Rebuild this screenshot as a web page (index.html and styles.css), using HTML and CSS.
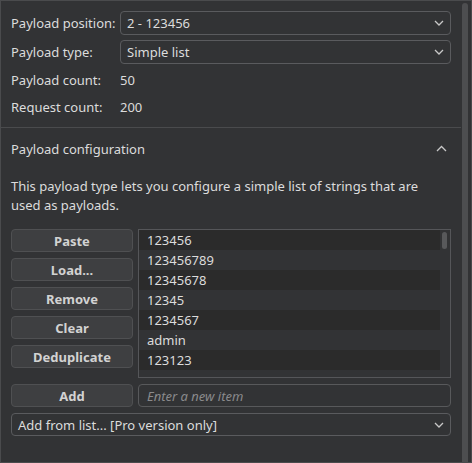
FILE: index.html
```html
<!DOCTYPE html>
<html>
<head>
<meta charset="utf-8">
<link rel="stylesheet" href="styles.css">
</head>
<body>
<div class="frame">
  <div class="content">
    <div class="fields">
      <div class="label">Payload position:</div>
      <div class="select"><span>2 - 123456</span><svg class="chev" viewBox="0 0 10 6"><path d="M1 1 L5 5 L9 1"/></svg></div>
      <div class="label">Payload type:</div>
      <div class="select"><span>Simple list</span><svg class="chev" viewBox="0 0 10 6"><path d="M1 1 L5 5 L9 1"/></svg></div>
      <div class="label">Payload count:</div>
      <div class="value">50</div>
      <div class="label">Request count:</div>
      <div class="value">200</div>
    </div>
    <div class="section">
      <div class="section-head">
        <span>Payload configuration</span>
        <svg class="chev-up" viewBox="0 0 11 7"><path d="M1 6 L5.5 1.5 L10 6"/></svg>
      </div>
      <p class="desc">This payload type lets you configure a simple list of strings that are used as payloads.</p>
      <div class="editor">
        <div class="buttons">
          <div class="btn">Paste</div>
          <div class="btn">Load...</div>
          <div class="btn">Remove</div>
          <div class="btn">Clear</div>
          <div class="btn">Deduplicate</div>
        </div>
        <div class="list">
          <div class="rows">
            <div class="row">123456</div>
            <div class="row">123456789</div>
            <div class="row">12345678</div>
            <div class="row">12345</div>
            <div class="row">1234567</div>
            <div class="row">admin</div>
            <div class="row">123123</div>
          </div>
          <div class="list-scroll"><div class="list-thumb"></div></div>
        </div>
      </div>
      <div class="add-row">
        <div class="btn">Add</div>
        <div class="input">Enter a new item</div>
      </div>
      <div class="select wide"><span>Add from list... [Pro version only]</span><svg class="chev" viewBox="0 0 10 6"><path d="M1 1 L5 5 L9 1"/></svg></div>
    </div>
  </div>
  <div class="scrollbar"><div class="thumb"></div></div>
</div>
</body>
</html>
```

FILE: styles.css
```css
* { box-sizing: border-box; }
html, body { margin: 0; padding: 0; background: #323335; }
body {
  font-family: "Noto Sans", "Open Sans", sans-serif;
  font-size: 13px;
  color: #dcdcdc;
}
.frame {
  width: 472px;
  height: 463px;
  border: 1px solid #4a4b4d;
  display: flex;
  overflow: hidden;
  background: #323335;
}
.content {
  width: 460px;
  flex: none;
}
.fields {
  display: grid;
  grid-template-columns: 104px 1fr;
  grid-template-rows: 24px 24px 22px 22px;
  column-gap: 5px;
  row-gap: 5px;
  padding: 10px 10px 0 10px;
  align-items: center;
}
.label, .value { line-height: 19px; white-space: nowrap; }
.select {
  height: 24px;
  border: 1px solid #5a5b5e;
  border-radius: 4px;
  display: flex;
  align-items: center;
  justify-content: space-between;
  padding: 0 6px 0 6px;
}
.chev { width: 10px; height: 6px; }
.chev path, .chev-up path {
  fill: none;
  stroke: #c8c8c8;
  stroke-width: 1.3;
}
.section {
  margin-top: 9px;
  border-top: 1px solid #4a4b4d;
  padding: 0 10px;
}
.section-head {
  height: 41px;
  display: flex;
  align-items: center;
  justify-content: space-between;
  padding-right: 4px;
}
.chev-up { width: 11px; height: 7px; }
.desc {
  margin: 8px 0 0 0;
  line-height: 19px;
  padding-right: 10px;
}
.editor {
  display: flex;
  gap: 5px;
  margin-top: 14px;
}
.buttons {
  width: 122px;
  display: flex;
  flex-direction: column;
  gap: 6px;
}
.btn {
  height: 23px;
  background: #3e3f41;
  border: 1px solid #4f5052;
  border-radius: 4px;
  font-weight: bold;
  color: #d2d2d2;
  display: flex;
  align-items: center;
  justify-content: center;
}
.list {
  flex: 1;
  height: 149px;
  border: 1px solid #555659;
  display: flex;
  overflow: hidden;
}
.rows { flex: 1; overflow: hidden; }
.row {
  height: 20px;
  line-height: 20px;
  padding-left: 8px;
  color: #dcdcdc;
}
.row:nth-child(odd) { background: #2b2b2b; }
.list-scroll {
  width: 10px;
  padding: 2px 3px 0 2px;
}
.list-thumb {
  height: 17px;
  border-radius: 3px;
  background: #58595b;
}
.add-row {
  display: flex;
  gap: 5px;
  margin-top: 6px;
}
.add-row .btn { width: 122px; }
.input {
  flex: 1;
  height: 23px;
  border: 1px solid #58595b;
  border-radius: 4px;
  padding-left: 8px;
  display: flex;
  align-items: center;
  font-style: italic;
  color: #8a8a8c;
}
.select.wide {
  margin-top: 6px;
  height: 23px;
}
.scrollbar {
  width: 10px;
  flex: none;
  padding: 2px 3px 0 1px;
}
.thumb {
  height: 480px;
  border-radius: 3px;
  background: #4d4e50;
}
```
